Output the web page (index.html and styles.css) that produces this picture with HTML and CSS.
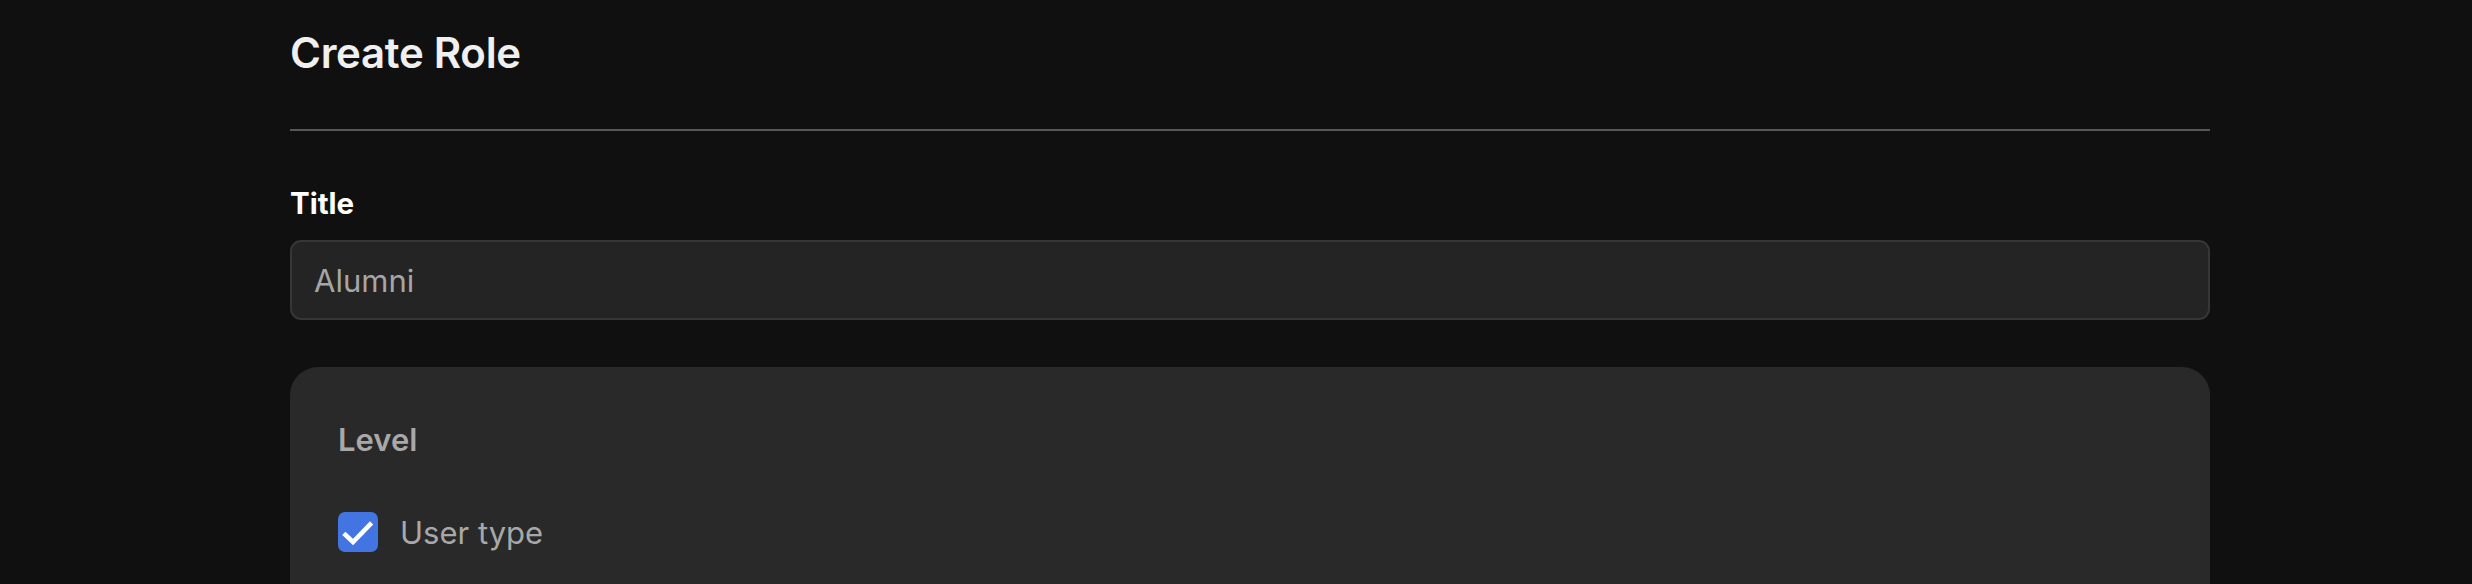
FILE: index.html
```html
<!DOCTYPE html>
<html lang="en">
<head>
<meta charset="utf-8">
<title>Create Role</title>
<link rel="stylesheet" href="styles.css">
</head>
<body>
<main class="page">
  <h1 class="page-title">Create Role</h1>
  <hr class="divider">
  <form class="form">
    <div class="field">
      <label class="field-label" for="title">Title</label>
      <input class="text-input" id="title" type="text" value="Alumni">
    </div>
    <section class="card">
      <h2 class="card-title">Level</h2>
      <label class="check-row">
        <span class="checkbox">
          <svg viewBox="0 0 40 40" width="40" height="40" aria-hidden="true">
            <polyline points="7.5,23 15,30 32,12.5" fill="none" stroke="#ffffff" stroke-width="4.6" stroke-linecap="square" stroke-linejoin="miter"/>
          </svg>
        </span>
        <span class="check-label">User type</span>
      </label>
    </section>
  </form>
</main>
</body>
</html>
```
FILE: styles.css
```css
html, body {
  margin: 0;
  padding: 0;
  background: #101010;
}
body {
  font-family: Inter, "Noto Sans", "Liberation Sans", sans-serif;
  color: #f2f2f2;
  height: 584px;
  overflow: hidden;
}
.page {
  width: 1920px;
  padding: 28px 0 0 290px;
}
.page-title {
  margin: 0;
  font-size: 42px;
  line-height: 50px;
  font-weight: 600;
  color: #f0f0f0;
  letter-spacing: -0.3px;
}
.divider {
  margin: 51px 0 0 0;
  border: 0;
  height: 2px;
  background: #575757;
}
.form {
  display: flex;
  flex-direction: column;
}
.field {
  display: flex;
  flex-direction: column;
  margin-top: 54px;
}
.field-label {
  font-size: 29.5px;
  line-height: 36px;
  font-weight: 700;
  color: #ffffff;
}
.text-input {
  margin-top: 19px;
  box-sizing: border-box;
  height: 80px;
  width: 100%;
  padding: 0 22px;
  background: #242424;
  border: 2px solid #363636;
  border-radius: 11px;
  font-family: Inter, "Noto Sans", "Liberation Sans", sans-serif;
  font-size: 31px;
  color: #a6a6a6;
  outline: none;
}
.card {
  margin-top: 47px;
  background: #292929;
  border-radius: 28px;
  padding: 48px 48px 60px 48px;
  min-height: 300px;
}
.card-title {
  margin: 0;
  font-size: 31px;
  line-height: 40px;
  font-weight: 600;
  color: #a8a8a8;
  position: relative;
  top: 5px;
}
.check-row {
  display: flex;
  align-items: center;
  gap: 22px;
  margin-top: 57px;
}
.checkbox {
  width: 40px;
  height: 40px;
  border-radius: 7px;
  background: #4274e2;
  display: flex;
}
.check-label {
  font-size: 31px;
  color: #a8a8a8;
}
```
